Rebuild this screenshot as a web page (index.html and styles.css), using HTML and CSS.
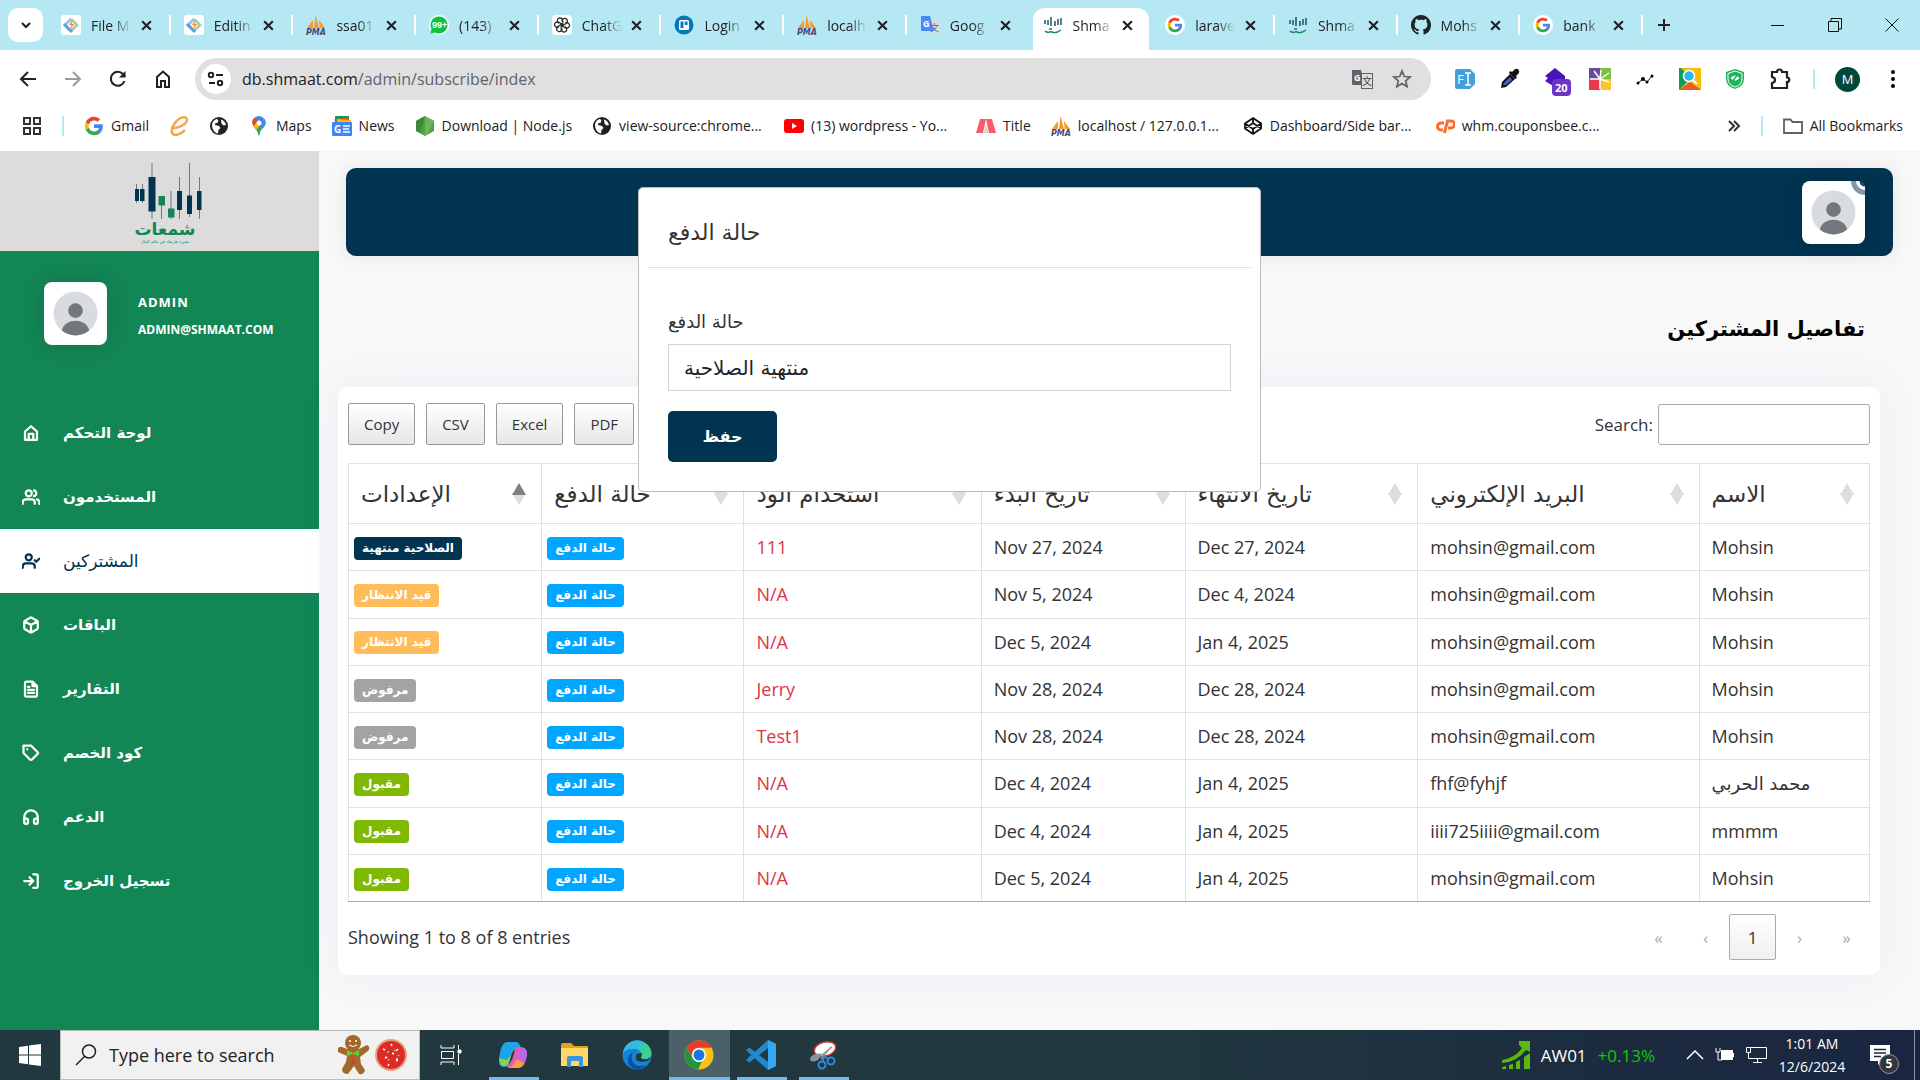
FILE: index.html
```html
<!DOCTYPE html>
<html lang="ar">
<head>
<meta charset="utf-8">
<title>Shmaat</title>
<link rel="stylesheet" href="styles.css">
</head>
<body>
<svg class="sprite" aria-hidden="true">
  <symbol id="g" viewBox="0 0 24 24"><path fill="#4285F4" d="M22.56 12.25c0-.78-.07-1.53-.2-2.25H12v4.26h5.92c-.26 1.37-1.04 2.53-2.21 3.31v2.77h3.57c2.08-1.92 3.28-4.74 3.28-8.09z"/><path fill="#34A853" d="M12 23c2.97 0 5.46-.98 7.28-2.66l-3.57-2.77c-.98.66-2.23 1.06-3.71 1.06-2.86 0-5.29-1.93-6.16-4.53H2.18v2.84C3.99 20.53 7.7 23 12 23z"/><path fill="#FBBC05" d="M5.84 14.09c-.22-.66-.35-1.36-.35-2.09s.13-1.43.35-2.09V7.07H2.18C1.43 8.55 1 10.22 1 12s.43 3.45 1.18 4.93l2.85-2.22.81-.62z"/><path fill="#EA4335" d="M12 5.38c1.62 0 3.06.56 4.21 1.64l3.15-3.15C17.45 2.09 14.97 1 12 1 7.7 1 3.99 3.47 2.18 7.07l3.66 2.84c.87-2.6 3.3-4.53 6.16-4.53z"/></symbol>
  <symbol id="gdisc" viewBox="0 0 20 20"><circle cx="10" cy="10" r="10" fill="#fff"/><use href="#g" x="2" y="2" width="16" height="16"/></symbol>
  <symbol id="hostinger" viewBox="0 0 20 20"><rect width="20" height="20" rx="3" fill="#fff"/><path d="M2 10 9 3l2 2-5 5 5 5-2 2z" fill="#8fc3e8"/><path d="m18 10-7 7-2-2 5-5-5-5 2-2z" fill="#a9cbb0"/><path d="m2 10 8 8 2-2-8-8z" fill="#5f9fe0"/><path d="M11.500 5 8 10h2.500L9 15l4-6h-2.500z" fill="#f5821f"/></symbol>
  <symbol id="pma" viewBox="0 0 20 20"><path d="M1 13 7 5v8zM8 13l1.500-13L13 13zM13.500 13l-.5-8 6 8z" fill="#f79a2c"/><text x="0" y="20" font-family="DejaVu Sans" font-size="8" font-weight="700" font-style="italic" fill="#4a4a78">PMA</text></symbol>
  <symbol id="wa" viewBox="0 0 20 20"><circle cx="10" cy="10" r="10" fill="#fff"/><path d="M10 1.500a8.500 8.500 0 1 1-4 16L1.500 18.500l1-4.500A8.500 8.500 0 0 1 10 1.500z" fill="#0cc143"/><text x="3" y="13" font-family="Liberation Sans" font-size="9" font-weight="700" fill="#fff">99+</text></symbol>
  <symbol id="gpt" viewBox="0 0 20 20"><rect width="20" height="20" rx="4" fill="#fff"/><g fill="none" stroke="#222" stroke-width="1.200"><path id="pl" d="M10 6.500V5.500a2.800 2.800 0 0 1 5-1c.8 1.500.3 3-.8 4L10 11"/><use href="#pl" transform="rotate(60 10 10)"/><use href="#pl" transform="rotate(120 10 10)"/><use href="#pl" transform="rotate(180 10 10)"/><use href="#pl" transform="rotate(240 10 10)"/><use href="#pl" transform="rotate(300 10 10)"/></g></symbol>
  <symbol id="trello" viewBox="0 0 20 20"><circle cx="10" cy="10" r="9.500" fill="#0079bf"/><rect x="5" y="5" width="10" height="10" rx="1.500" fill="#fff"/><path d="M6.500 6.500h3v6.500h-3zM10.800 6.500h2.700V10h-2.700z" fill="#0079bf"/></symbol>
  <symbol id="gtr" viewBox="0 0 20 20"><rect x="9" y="5" width="11" height="14" rx="1" fill="#dcdcdc"/><text x="10" y="16" font-family="Noto Sans CJK SC" font-size="9" fill="#666">文</text><path d="M1 1h9l4 15H2a1 1 0 0 1-1-1z" fill="#4a8af4"/><text x="3" y="12" font-family="Open Sans" font-size="9" font-weight="700" fill="#fff">G</text></symbol>
  <symbol id="shm" viewBox="0 0 20 20"><path d="M2 5v4M5 5v5M8 2v9M12 6v5M15 4v6M18 3v7" stroke="#0a4a5c" stroke-width="1.400"/><path d="M2 16c3 3 5 0 7 1s5 1 9-2M6 14h3" stroke="#138656" stroke-width="1.400" fill="none"/></symbol>
  <symbol id="gh" viewBox="0 0 16 16"><path fill="#1f2328" d="M8 0C3.58 0 0 3.58 0 8c0 3.54 2.290 6.530 5.470 7.590.4.07.55-.17.55-.38 0-.19-.01-.82-.01-1.490-2.010.37-2.530-.49-2.690-.94-.09-.23-.48-.94-.82-1.130-.28-.15-.68-.52-.01-.53.63-.01 1.080.58 1.230.82.72 1.210 1.870.87 2.330.66.07-.52.28-.87.51-1.070-1.780-.2-3.640-.89-3.640-3.950 0-.87.31-1.590.82-2.150-.08-.2-.36-1.020.08-2.120 0 0 .67-.21 2.200.82.64-.18 1.320-.27 2-.27s1.360.09 2 .27c1.530-1.040 2.200-.82 2.200-.82.44 1.100.16 1.920.08 2.120.51.56.82 1.270.82 2.150 0 3.070-1.870 3.750-3.650 3.950.29.25.54.73.54 1.480 0 1.070-.01 1.930-.01 2.200 0 .21.15.46.55.38A8.010 8.010 0 0016 8c0-4.420-3.580-8-8-8z"/></symbol>
  <symbol id="x" viewBox="0 0 12 12"><path d="m2 2 8 8M10 2l-8 8" stroke="#202124" stroke-width="2" fill="none"/></symbol>
  <symbol id="globe" viewBox="0 0 20 20"><circle cx="10" cy="10" r="9" fill="#202124"/><path d="M3 9c0-3 2-5 4.500-6l2 1-1 3H6.500L6 9l4 1 1.500 2-2 2-.5 3.500C5.500 17 3 13 3 9zM12 3.500c2.500.5 4.500 3 5 5.500l-2.500.5-2-2z" fill="#fff"/></symbol>
  <symbol id="avatar" viewBox="0 0 46 46"><circle cx="23" cy="23" r="22.500" fill="#d8dce1"/><circle cx="23" cy="20" r="7.500" fill="#71777d"/><path d="M9 40.500C12 27 34 27 37 40.500a22.500 22.500 0 0 1-28 0z" fill="#71777d"/></symbol>
  <symbol id="sort" viewBox="0 0 14 22"><path d="M7 0l7 12H0z"/><path d="M7 22l7-12H0z"/></symbol>
</svg>

<header class="browser">
  <div class="tabstrip">
    <button class="tablist" aria-label="Search tabs"><svg width="14" height="14" viewBox="0 0 14 14"><path d="m3 5 4 4 4-4" fill="none" stroke="#202124" stroke-width="2"/></svg></button>
    <div class="tabs">
      <div class="tab"><svg class="fav"><use href="#hostinger"/></svg><span class="tabname">File M</span><svg class="close"><use href="#x"/></svg></div>
      <div class="tab"><svg class="fav"><use href="#hostinger"/></svg><span class="tabname">Editin</span><svg class="close"><use href="#x"/></svg></div>
      <div class="tab"><svg class="fav"><use href="#pma"/></svg><span class="tabname">ssa01</span><svg class="close"><use href="#x"/></svg></div>
      <div class="tab"><svg class="fav"><use href="#wa"/></svg><span class="tabname">(143)</span><svg class="close"><use href="#x"/></svg></div>
      <div class="tab"><svg class="fav"><use href="#gpt"/></svg><span class="tabname">ChatG</span><svg class="close"><use href="#x"/></svg></div>
      <div class="tab"><svg class="fav"><use href="#trello"/></svg><span class="tabname">Login</span><svg class="close"><use href="#x"/></svg></div>
      <div class="tab"><svg class="fav"><use href="#pma"/></svg><span class="tabname">localh</span><svg class="close"><use href="#x"/></svg></div>
      <div class="tab nosep"><svg class="fav"><use href="#gtr"/></svg><span class="tabname">Goog</span><svg class="close"><use href="#x"/></svg></div>
      <div class="tab active nosep"><svg class="fav"><use href="#shm"/></svg><span class="tabname">Shma</span><svg class="close"><use href="#x"/></svg></div>
      <div class="tab"><svg class="fav"><use href="#gdisc"/></svg><span class="tabname">larave</span><svg class="close"><use href="#x"/></svg></div>
      <div class="tab"><svg class="fav"><use href="#shm"/></svg><span class="tabname">Shma</span><svg class="close"><use href="#x"/></svg></div>
      <div class="tab"><svg class="fav"><use href="#gh"/></svg><span class="tabname">Mohs</span><svg class="close"><use href="#x"/></svg></div>
      <div class="tab"><svg class="fav"><use href="#gdisc"/></svg><span class="tabname">bank</span><svg class="close"><use href="#x"/></svg></div>
    </div>
    <button class="plain newtab" aria-label="New tab"><svg width="14" height="14" viewBox="0 0 14 14"><path d="M7 1v12M1 7h12" stroke="#202124" stroke-width="2"/></svg></button>
    <div class="winctl">
      <button class="plain" aria-label="Minimize"><svg width="14" height="14" viewBox="0 0 14 14"><path d="M0 7.500h13" stroke="#111"/></svg></button>
      <button class="plain" aria-label="Restore"><svg width="14" height="14" viewBox="0 0 14 14"><path d="M.5 3.500h10v10H.5zM3 3.500v-3h10.500V11h-3" fill="none" stroke="#111"/></svg></button>
      <button class="plain" aria-label="Close"><svg width="14" height="14" viewBox="0 0 14 14"><path d="m.5.5 13 13m0-13-13 13" stroke="#111"/></svg></button>
    </div>
  </div>
  <div class="toolbar">
    <button class="plain tool" aria-label="Back"><svg width="20" height="20" viewBox="0 0 20 20"><path d="M18 10H3m7-7-7 7 7 7" fill="none" stroke="#202124" stroke-width="2"/></svg></button>
    <button class="plain tool" aria-label="Forward"><svg width="20" height="20" viewBox="0 0 20 20"><path d="M2 10h15m-7-7 7 7-7 7" fill="none" stroke="#9c9c9c" stroke-width="2"/></svg></button>
    <button class="plain tool" aria-label="Reload"><svg width="20" height="20" viewBox="0 0 20 20"><path d="M16.500 12A7 7 0 1 1 15 5l2 2.500" fill="none" stroke="#202124" stroke-width="2"/><path d="M17.500 2v6.500H11z" fill="#202124"/></svg></button>
    <button class="plain tool" aria-label="Home"><svg width="20" height="20" viewBox="0 0 20 20"><path d="M4 18V8l6-5.500L16 8v10h-4v-6H8v6z" fill="none" stroke="#202124" stroke-width="2"/></svg></button>
    <div class="omnibox">
      <span class="siteinfo"><svg width="18" height="18" viewBox="0 0 18 18" fill="none" stroke="#202124" stroke-width="2"><circle cx="4" cy="5" r="2.200"/><path d="M9 5h7M2 13h6"/><circle cx="13" cy="13" r="2.200"/></svg></span>
      <span class="url">db.shmaat.com<i>/admin/subscribe/index</i></span>
      <svg width="22" height="22" viewBox="0 0 22 22"><path d="M1 2h9l4 15H2a1 1 0 0 1-1-1z" fill="#5f6368"/><text x="3" y="13" font-family="Open Sans" font-size="9" font-weight="700" fill="#fff">G</text><rect x="10.500" y="5.500" width="11" height="15" fill="#e0e0e0" stroke="#5f6368"/><text x="11" y="17" font-family="Noto Sans CJK SC" font-size="10" fill="#444">文</text></svg>
      <svg width="20" height="20" viewBox="0 0 20 20"><path d="m10 2 2.300 5.500 5.900.5-4.500 3.900 1.400 5.800L10 14.600l-5.100 3.100 1.400-5.800L1.800 8l5.900-.5z" fill="none" stroke="#5f6368" stroke-width="1.700"/></svg>
    </div>
    <div class="exts">
      <span class="tool"><svg width="22" height="22" viewBox="0 0 22 22"><path d="M1 3a2 2 0 0 1 2-2h13l5 5v10l-5 5H3a2 2 0 0 1-2-2z" fill="#42a0dc"/><text x="3" y="16" font-family="Open Sans" font-size="13" fill="#fff">F</text><path d="M11 5h6M11 17h6M14 5v12" stroke="#fff" stroke-width="1.500"/></svg></span>
      <span class="tool"><svg width="22" height="22" viewBox="0 0 22 22"><path d="M15 2q4-3 5 1 1 2-3 5l1 2-2 1-6-6 1-2 2 1z" fill="#111"/><path d="M11 6 3 14l-1 6 5-1 9-8z" fill="#111"/><path d="m5 15 6-6 2 3-6 5H4z" fill="#4a5fd0"/></svg></span>
      <span class="tool badge-host"><svg width="22" height="22" viewBox="0 0 22 22"><path d="M11 0 21 8v3l-10 8L1 13l3-3-3-2z" fill="#4b14b8"/></svg><b class="count">20</b></span>
      <span class="tool"><svg width="22" height="22" viewBox="0 0 22 22"><path d="M0 0h11v11H0z" fill="#6b4a9c"/><path d="M11 0h11v11H11z" fill="#7cc142"/><path d="M0 11h11v11H0z" fill="#e8394a"/><path d="M11 11h11v11H11z" fill="#fbc52f"/><path d="M11 11 5 3M11 11l1-9M11 11l9-6M11 11l9 3M11 11v10M11 11H1" stroke="#fff" stroke-width="1.500"/></svg></span>
      <span class="tool"><svg width="20" height="20" viewBox="0 0 20 20"><path d="m3 14 5-4 4 3 5-6" fill="none" stroke="#111"/><circle cx="3" cy="14" r="1.500"/><circle cx="8" cy="10" r="2"/><circle cx="12" cy="13" r="1.500"/><circle cx="17" cy="7" r="1.500"/></svg></span>
      <span class="tool"><svg width="22" height="22" viewBox="0 0 22 22"><rect width="22" height="22" fill="#fbbc05"/><path d="M0 0h22L0 22z" fill="#0f9d58"/><path d="m0 22 11-8 11 8z" fill="#ea5a2a"/><path d="m2 0 20 20V0z" fill="#fbbc05"/><circle cx="10" cy="8" r="5.500" fill="#29b6f6" stroke="#fff" stroke-width="1.500"/><path d="m14 12 4 4" stroke="#fff" stroke-width="2"/></svg></span>
      <span class="tool"><svg width="22" height="22" viewBox="0 0 22 22"><path d="m11 1 9 3v7q0 7-9 10Q2 18 2 11V4z" fill="#21b35c"/><path d="m11 3 7 2.500V11q0 5.500-7 8Q4 16.500 4 11V5.500z" fill="none" stroke="#fff"/><path d="M6.500 10q4.500-5 9 0-4.500 5-9 0z" fill="#fff"/><path d="M8 14l6-8" stroke="#21b35c" stroke-width="1.500" fill="none"/></svg></span>
      <span class="tool"><svg width="24" height="24" viewBox="0 0 24 24"><path d="M4 5h5a2.500 2.500 0 0 1 5 0h5v5.500a2 2 0 0 1 0 4.500v6H4v-5q3-.5 3-3t-3-3z" fill="none" stroke="#202124" stroke-width="2.200"/></svg></span>
    </div>
    <span class="tsep"></span>
    <span class="profile">M</span>
    <button class="plain" aria-label="Menu"><svg width="6" height="20" viewBox="0 0 6 20"><circle cx="3" cy="3" r="2"/><circle cx="3" cy="10" r="2"/><circle cx="3" cy="17" r="2"/></svg></button>
  </div>
  <nav class="bookmarks">
    <svg width="20" height="20" viewBox="0 0 20 20"><path d="M2 2h6v6H2zM12 2h6v6h-6zM2 12h6v6H2zM12 12h6v6h-6z" fill="none" stroke="#333" stroke-width="2"/></svg>
    <span class="tsep"></span>
    <a href="#"><svg class="fav"><use href="#g"/></svg>Gmail</a>
    <a href="#" aria-label="e"><svg class="fav" viewBox="0 0 20 20"><path d="M2 12C9 13 18 8 18 4c0-5-8-3-12 3-4 5-5 11 0 12 4 0 7-2 10-5" fill="none" stroke="#f9a34e" stroke-width="2.500"/></svg></a>
    <a href="#" aria-label="site"><svg class="fav"><use href="#globe"/></svg></a>
    <a href="#"><svg class="fav" viewBox="0 0 20 20"><path d="M10 20Q9 14 5 11 1 4 6 1.500L14 5z" fill="#34a853"/><path d="M10 20Q11 14 15 11 18 7 15.500 3L5 11q4 4 5 9z" fill="#34a853"/><path d="M4 9Q2 4 6 1.500L10 6 5 11z" fill="#ea4335"/><path d="M6 1.500Q11-2 15.500 3L10 7z" fill="#4285f4"/><path d="m4.500 10 4-4 3 3L7 14z" fill="#fbbc04"/><path d="m15.500 3-5 6 1 5 4-4q2-4 0-7z" fill="#4285f4"/><circle cx="10" cy="7" r="2.500" fill="#fff"/></svg>Maps</a>
    <a href="#"><svg class="fav" viewBox="0 0 20 20"><path d="M3 0h14v8H3z" fill="#0f9d58"/><path d="M1 4 16 1l2 6z" fill="#ea4335"/><path d="m5 3 14 1v5H5z" fill="#fbbc04"/><rect y="6" width="20" height="14" rx="1" fill="#4285f4"/><text x="2" y="17" font-family="Open Sans" font-size="10" font-weight="700" fill="#fff">G</text><path d="M11 10h7M11 13h6M11 16h7" stroke="#fff" stroke-width="1.500"/></svg>News</a>
    <a href="#"><svg class="fav" viewBox="0 0 20 20"><path d="m10 0 9 5v10l-9 5-9-5V5z" fill="#539e43"/><path d="m10 0 9 5-6 13-3 2z" fill="#6cb35a"/><path d="m1 5 9-5-5 17-4-2z" fill="#3f873f"/></svg>Download | Node.js</a>
    <a href="#" class="wide"><svg class="fav"><use href="#globe"/></svg>view-source:chrome...</a>
    <a href="#" class="wide"><svg class="fav" viewBox="0 0 20 20"><rect y="3" width="20" height="14" rx="3" fill="#f00"/><path d="m8 7 5 3-5 3z" fill="#fff"/></svg>(13) wordpress - Yo...</a>
    <a href="#"><svg class="fav" viewBox="0 0 20 20"><path d="M4 3h6L7 17H0z" fill="#fb5a6b"/><path d="M10 3h6l4 14h-7z" fill="#fb5a6b"/><path d="m10 8 2.500 9h-5z" fill="#cfd3da"/></svg>Title</a>
    <a href="#" class="wide"><svg class="fav"><use href="#pma"/></svg>localhost / 127.0.0.1...</a>
    <a href="#" class="wide"><svg class="fav" viewBox="0 0 20 20"><path d="m10 2 8 5.500v5L10 18l-8-5.500v-5zM10 2v5m0 6v5M2 7.500l8 5.500 8-5.500M2 12.500 10 7l8 5.500" fill="none" stroke="#111" stroke-width="1.800"/></svg>Dashboard/Side bar...</a>
    <a href="#" class="wide"><svg class="fav" viewBox="0 0 20 20"><path d="M9 7H6a3.500 3.500 0 1 0 0 7h2M9.500 17l3-12H16a3.500 3.500 0 1 1 0 7h-3" fill="none" stroke="#ff6c2c" stroke-width="3"/></svg>whm.couponsbee.c...</a>
    <svg class="more" width="14" height="12" viewBox="0 0 14 12"><path d="m2 1 5 5-5 5M7 1l5 5-5 5" fill="none" stroke="#333" stroke-width="2"/></svg>
    <span class="tsep"></span>
    <a href="#" class="all"><svg class="fav" viewBox="0 0 20 20"><path d="M1 16V3.500h6.500L9.500 6H19v11H1z" fill="none" stroke="#5f6368" stroke-width="1.800"/></svg>All Bookmarks</a>
  </nav>
</header>

<div class="app">
  <aside class="sidebar">
    <div class="brand">
      <svg width="72" height="84" viewBox="132 161 72 84">
        <path d="M136.500 184v19M142.500 184v19M152 163v56M161.500 196v23M171 191v28M179.500 177v42M189.500 163v54M199.500 177v42" stroke="#777" stroke-width="1"/>
        <path fill="#003451" d="M135 189h4v12h-4zM140 189h4.500v12H140zM148.500 177h7v34.500h-7zM177 191h5v19h-5zM187 195.500h5V214h-5zM197 191h4.500v19H197z"/>
        <path fill="#138656" d="M158.500 196h6.500v9.500h-6.500zM168 208.500h6.500v9H168z"/>
        <text x="165" y="235" text-anchor="middle" font-family="DejaVu Sans" font-size="17" font-weight="700" fill="#138656">شمعات</text>
        <text x="165" y="243" text-anchor="middle" font-family="DejaVu Sans" font-size="4" fill="#138656">تضيء طريقك في عالم المال</text>
      </svg>
    </div>
    <div class="user">
      <span class="avatar"><svg><use href="#avatar"/></svg></span>
      <div><p class="uname">ADMIN</p><p class="umail">ADMIN@SHMAAT.COM</p></div>
    </div>
    <nav class="menu">
      <a href="#"><svg viewBox="0 0 24 24"><path d="M4 10l8-7 8 7v11H4zM9 21v-8h6v8"/></svg>لوحة التحكم</a>
      <a href="#"><svg viewBox="0 0 24 24"><path d="M17 21v-2a4 4 0 0 0-4-4H5a4 4 0 0 0-4 4v2"/><circle cx="9" cy="7" r="4"/><path d="M23 21v-2a4 4 0 0 0-3-3.870M16 3.130a4 4 0 0 1 0 7.750"/></svg>المستخدمون</a>
      <a href="#" class="current"><svg viewBox="0 0 24 24"><path d="M17 21v-2a4 4 0 0 0-4-4H5a4 4 0 0 0-4 4v2"/><circle cx="9" cy="7" r="4"/><path d="m17 11 2 2 4-4"/></svg>المشتركين</a>
      <a href="#"><svg viewBox="0 0 24 24"><path d="M21 16V8a2 2 0 0 0-1-1.730l-7-4a2 2 0 0 0-2 0l-7 4A2 2 0 0 0 3 8v8a2 2 0 0 0 1 1.730l7 4a2 2 0 0 0 2 0l7-4A2 2 0 0 0 21 16zM3.270 6.960 12 12.010l8.730-5.050M12 22.080V12"/></svg>الباقات</a>
      <a href="#"><svg viewBox="0 0 24 24"><path d="M14 2H6a2 2 0 0 0-2 2v16a2 2 0 0 0 2 2h12a2 2 0 0 0 2-2V8zM14 2v6h6M16 13H8M16 17H8M10 9H8"/></svg>التقارير</a>
      <a href="#"><svg viewBox="0 0 24 24"><path d="m20.590 13.410-7.170 7.170a2 2 0 0 1-2.830 0L2 12V2h10l8.590 8.590a2 2 0 0 1 0 2.820zM7 7h.01"/></svg>كود الخصم</a>
      <a href="#"><svg viewBox="0 0 24 24"><path d="M3 18v-6a9 9 0 0 1 18 0v6M21 19a2 2 0 0 1-2 2h-1a2 2 0 0 1-2-2v-3a2 2 0 0 1 2-2h3zM3 19a2 2 0 0 0 2 2h1a2 2 0 0 0 2-2v-3a2 2 0 0 0-2-2H3z"/></svg>الدعم</a>
      <a href="#"><svg viewBox="0 0 24 24"><path d="M15 3h4a2 2 0 0 1 2 2v14a2 2 0 0 1-2 2h-4M10 17l5-5-5-5M15 12H3"/></svg>تسجيل الخروج</a>
    </nav>
  </aside>

  <main class="main">
    <div class="topbar"><span class="avatar status"><svg><use href="#avatar"/></svg></span></div>
    <h1>تفاصيل المشتركين</h1>
    <section class="card">
      <div class="controls">
        <div class="exports"><button>Copy</button><button>CSV</button><button>Excel</button><button>PDF</button></div>
        <div class="search"><label for="q">Search:</label><input id="q" type="search"></div>
      </div>
      <table>
        <colgroup><col class="c1"><col class="c2"><col class="c3"><col class="c4"><col class="c5"><col class="c6"><col class="c7"></colgroup>
        <thead><tr>
          <th><div class="hd">الإعدادات<svg class="sort asc"><use href="#sort"/><path d="M7 0l7 12H0z" fill="#808080"/></svg></div></th>
          <th><div class="hd">حالة الدفع<svg class="sort"><use href="#sort"/></svg></div></th>
          <th><div class="hd">استخدام الود<svg class="sort"><use href="#sort"/></svg></div></th>
          <th><div class="hd">تاريخ البدء<svg class="sort"><use href="#sort"/></svg></div></th>
          <th><div class="hd">تاريخ الانتهاء<svg class="sort"><use href="#sort"/></svg></div></th>
          <th><div class="hd">البريد الإلكتروني<svg class="sort"><use href="#sort"/></svg></div></th>
          <th><div class="hd">الاسم<svg class="sort"><use href="#sort"/></svg></div></th>
        </tr></thead>
        <tbody>
          <tr><td><span class="tag navy">الصلاحية منتهية</span></td><td><span class="tag blue">حالة الدفع</span></td><td class="red">111</td><td>Nov 27, 2024</td><td>Dec 27, 2024</td><td>mohsin@gmail.com</td><td>Mohsin</td></tr>
          <tr><td><span class="tag amber">قيد الانتظار</span></td><td><span class="tag blue">حالة الدفع</span></td><td class="red">N/A</td><td>Nov 5, 2024</td><td>Dec 4, 2024</td><td>mohsin@gmail.com</td><td>Mohsin</td></tr>
          <tr><td><span class="tag amber">قيد الانتظار</span></td><td><span class="tag blue">حالة الدفع</span></td><td class="red">N/A</td><td>Dec 5, 2024</td><td>Jan 4, 2025</td><td>mohsin@gmail.com</td><td>Mohsin</td></tr>
          <tr><td><span class="tag grey">مرفوض</span></td><td><span class="tag blue">حالة الدفع</span></td><td class="red">Jerry</td><td>Nov 28, 2024</td><td>Dec 28, 2024</td><td>mohsin@gmail.com</td><td>Mohsin</td></tr>
          <tr><td><span class="tag grey">مرفوض</span></td><td><span class="tag blue">حالة الدفع</span></td><td class="red">Test1</td><td>Nov 28, 2024</td><td>Dec 28, 2024</td><td>mohsin@gmail.com</td><td>Mohsin</td></tr>
          <tr><td><span class="tag green">مقبول</span></td><td><span class="tag blue">حالة الدفع</span></td><td class="red">N/A</td><td>Dec 4, 2024</td><td>Jan 4, 2025</td><td>fhf@fyhjf</td><td class="ar">محمد الحربي</td></tr>
          <tr><td><span class="tag green">مقبول</span></td><td><span class="tag blue">حالة الدفع</span></td><td class="red">N/A</td><td>Dec 4, 2024</td><td>Jan 4, 2025</td><td>iiii725iiii@gmail.com</td><td>mmmm</td></tr>
          <tr><td><span class="tag green">مقبول</span></td><td><span class="tag blue">حالة الدفع</span></td><td class="red">N/A</td><td>Dec 5, 2024</td><td>Jan 4, 2025</td><td>mohsin@gmail.com</td><td>Mohsin</td></tr>
        </tbody>
      </table>
      <div class="foot">
        <span>Showing 1 to 8 of 8 entries</span>
        <div class="pager"><button disabled>«</button><button disabled>‹</button><button class="on">1</button><button disabled>›</button><button disabled>»</button></div>
      </div>
    </section>
  </main>
</div>

<form class="modal" role="dialog" aria-label="حالة الدفع">
  <h2>حالة الدفع</h2>
  <div class="mbody">
    <label for="st">حالة الدفع</label>
    <select id="st"><option>منتهية الصلاحية</option></select>
    <button type="button" class="save">حفظ</button>
  </div>
</form>

<footer class="taskbar">
  <button class="plain start" aria-label="Start"><svg width="22" height="22" viewBox="0 0 22 22"><path d="m0 3 9-1.300V10.500H0zM10 1.500 22 0v10.500H10zM0 11.500h9v8.800L0 19zM10 11.500h12V22l-12-1.500z" fill="#fff"/></svg></button>
  <label class="tsearch"><svg width="22" height="24" viewBox="0 0 22 24"><circle cx="14" cy="8.500" r="6.500" fill="none" stroke="#222" stroke-width="1.500"/><path d="M9.500 13.500 1 22" stroke="#222" stroke-width="1.500"/></svg><input type="text" placeholder="Type here to search">
    <svg width="70" height="42" viewBox="0 0 70 42"><g fill="#a5682a"><circle cx="15" cy="9" r="8"/><path d="M9 15h12l8-4q4 2 1 6l-8 6 1 7 4 6q-1 5-6 4l-5-8-6 8q-6 0-6-5l4-7 1-6-9-4q-1-6 4-5z"/></g><path d="m9 16 6 3 6-3v6l-6-2-6 2z" fill="#5ed03c"/><path d="M11 11q4 3 8 0" fill="none" stroke="#fff"/><circle cx="12" cy="7" r="1" fill="#fff"/><circle cx="18" cy="7" r="1" fill="#fff"/><path d="M15 24v6" stroke="#d83a2a" stroke-width="2"/><circle cx="53" cy="21" r="16" fill="#e8a07a"/><circle cx="53" cy="21" r="14" fill="#e02a2a"/><path d="m45 15 2 1m6-6 1 2m6 3-2 2m-11 7 2-1m5-4 2 1m4 6-2 1m-8 5 1-2m7-5 2 0" stroke="#fff" stroke-width="1.500"/><path d="m49 18 2 0m5-2 1 1m-7 9 1-1m9-3 1-1" stroke="#6f6" stroke-width="1.500"/></svg></label>
  <div class="pins">
    <span><svg width="22" height="20" viewBox="0 0 22 20" fill="none" stroke="#fff"><path d="M1 0v3h13V0M1.500 6.500h12v7h-12zM1 20v-3h13v3M18.500 0v4M18.500 9v11"/><path d="M18 5h3v3h-3z" fill="#fff"/></svg></span>
    <span class="run"><svg width="30" height="30" viewBox="0 0 30 30"><path d="M9 2h9q3 0 4 4l1 3h-5q-3 0-4 4l-3 10q-1 4-5 4-5 0-5-6Q2 3 9 2z" fill="#1fa3e8"/><path d="M1 18q1 8 5 8t5-4l3-9q1-4 4-4L9 20z" fill="#8bd34a"/><path d="M21 28h-9q-3 0-4-3 4 0 5-4l3-10q1-4 5-4 9 0 8 8-2 13-8 13z" fill="#e35bb0"/><path d="M23 7q7 1 6 9-2 5-4 7l-5-6z" fill="#b36be8"/><path d="M12 28h9q3-1 5-5l-7-4-4 6q-2 3-5 2z" fill="#ff9a4a"/><path d="m15 11 2-1-3 10-2 1z" fill="#213840"/></svg></span>
    <span><svg width="28" height="26" viewBox="0 0 28 26"><path d="M0 3a2 2 0 0 1 2-2h8l3 3h13a1 1 0 0 1 1 1v18H0z" fill="#e2a21c"/><path d="M0 6h27v18H0z" fill="#ffd765"/><path d="M6 25v-9a2 2 0 0 1 2-2h12a2 2 0 0 1 2 2v9h-4v-6h-8v6z" fill="#3b94dc"/></svg></span>
    <span><svg width="30" height="30" viewBox="0 0 30 30"><circle cx="15" cy="15" r="14.500" fill="#1683d8"/><path d="M1 13C3 4 10 .5 15 .5 24 .5 30 8 29.500 14c-.5 6-9 7-11 4 2-3 1-8-4-9-6-1-11 0-13.500 4z" fill="#3fd08f"/><path d="M1 13C3 4 10 .5 15 .5q5 0 8 3L15 9q-9-2-14 4z" fill="#35b8e8"/><path d="M10 15c-2 8 5 13 14 10-6 7-18 5-18-5 0-5 4-8 8-9q-4 1-4 4z" fill="#0c4f9e"/><path d="M18.500 18q2-2 1-5l-5 1q-4 10 11 7 3-2 3-4-4 4-10 1z" fill="#213840"/></svg></span>
    <span class="run chromeon"><svg width="30" height="30" viewBox="0 0 30 30"><circle cx="15" cy="15" r="14.500" fill="#fbc116"/><path d="M2.400 7.800A14.500 14.500 0 0 1 27.600 7.800H15a7 7 0 0 0-6.200 10.500z" fill="#e33b2e"/><path d="M2.400 7.800 9 18.500A7 7 0 0 0 18 21.300L14 29.500A14.500 14.500 0 0 1 2.400 7.800z" fill="#229342"/><circle cx="15" cy="15" r="7" fill="#fff"/><circle cx="15" cy="15" r="5.500" fill="#1a73e8"/></svg></span>
    <span class="run"><svg width="30" height="30" viewBox="0 0 30 30"><path d="m22 0 8 4v22l-8 4L2 12 0 10l3-2.500 3 2L22 22V8L6 20.500l-3 2L0 20l2-2z" fill="#1f8ad2"/><path d="m22 0 8 4v22l-8 4z" fill="#35a8f0"/></svg></span>
    <span class="run"><svg width="30" height="30" viewBox="0 0 30 30"><ellipse cx="17" cy="9" rx="11" ry="7" fill="#fff" stroke="#d03030" stroke-width="1.500" transform="rotate(-15 17 9)"/><path d="M2 18q4-6 12-4l-4 6q-8 4-8-2z" fill="#8a9298"/><path d="m11 17 13-10M13 19l10-12" stroke="#999" stroke-width="1.500"/><g fill="none" stroke="#2f8ad8" stroke-width="2"><circle cx="14" cy="25" r="3.500"/><circle cx="23" cy="21" r="3.500"/><path d="m15 21 1-5 4 3"/></g></svg></span>
  </div>
  <div class="tray">
    <svg width="28" height="28" viewBox="0 0 28 28" fill="#5cb811"><path d="M0 19Q13 17 20 7l-3-3V0h11v11l-4-2Q15 21 0 22zM0 28q0-3 4-3v3zM7 28v-4l4-1v5zM14 28v-7l4-2v9zM22 28V16l6-4v16z"/></svg>
    <span class="tick">AW01</span><span class="up">+0.13%</span>
    <svg class="chev" width="18" height="10" viewBox="0 0 18 10"><path d="m1 9 8-8 8 8" fill="none" stroke="#fff" stroke-width="1.500"/></svg>
    <svg width="20" height="16" viewBox="0 0 20 16"><path d="M1 1v4h4V1M3 5v8h4" fill="none" stroke="#fff"/><path d="M6.500 3.500h11v9h-11z" fill="#fff" stroke="#fff"/><path d="M18.500 6v4" stroke="#fff"/></svg>
    <svg width="21" height="18" viewBox="0 0 21 18"><path d="M5 1.500h15.500v11H2.500V7M7 16.500h9M11.500 13v3M.5 1.500h4v5h-4z" fill="none" stroke="#fff"/></svg>
    <span class="clock">1:01 AM<br>12/6/2024</span>
    <span class="note"><svg width="20" height="20" viewBox="0 0 20 20"><path d="M0 0h20v16h-8l-4 4v-4H0z" fill="#fff"/><path d="M4 4.500h12M4 8h12M4 11.500h7" stroke="#1b2840" stroke-width="1.300"/></svg><b>5</b></span>
    <span class="peek"></span>
  </div>
</footer>
</body>
</html>
```
FILE: styles.css
```css
*, *::before, *::after { box-sizing: border-box; }
body {
  margin: 0;
  min-height: 100vh;
  display: flex;
  flex-direction: column;
  position: relative;
  font-family: "Open Sans", "DejaVu Sans", sans-serif;
  color: #333;
}
button, input, select { font-family: inherit; }
a { color: inherit; text-decoration: none; }
p, h1, h2 { margin: 0; }
.sprite { display: none; }
.plain { border: 0; background: none; padding: 0; display: grid; place-items: center; }

/* browser chrome */
.browser { background: #fff; font-size: 14px; color: #202124; }
.tabstrip { display: flex; height: 50px; background: #b5e8f3; padding-left: 8px; align-items: stretch; }
.tablist { width: 35px; height: 34px; margin: 8px 5px 0 0; border: 0; border-radius: 10px; background: #fff; padding: 0; display: grid; place-items: center; }
.tabs { display: flex; flex: 0 1 1595px; min-width: 0; }
.tab { flex: 1 1 0; min-width: 0; display: flex; align-items: center; padding: 0 18px 0 13px; position: relative; }
.tab::after { content: ""; position: absolute; right: 0; top: 15px; width: 2px; height: 20px; background: #fff; }
.tab.nosep::after { display: none; }
.tab.active { z-index: 0; }
.tab.active::before { content: ""; position: absolute; z-index: -1; inset: 8px 3px 0 3px; background: #fff; border-radius: 12px 12px 0 0; }
.fav { width: 20px; height: 20px; flex: none; }
.tabname { flex: 1; min-width: 0; margin: 0 8px 0 10px; font-size: 14px; overflow: hidden; white-space: nowrap; -webkit-mask-image: linear-gradient(90deg, #000 22px, transparent 40px); mask-image: linear-gradient(90deg, #000 22px, transparent 40px); }
.close { width: 13px; height: 13px; flex: none; }
.newtab { width: 42px; }
.winctl { display: flex; margin-left: auto; }
.winctl button { width: 57px; }
.toolbar { display: flex; align-items: center; height: 58px; padding: 0 24px 0 5px; }
.tool { width: 45px; height: 34px; display: grid; place-items: center; flex: none; }
.omnibox { flex: 1; display: flex; align-items: center; gap: 19px; height: 42px; margin: 0 11px 0 10px; padding: 0 19px 0 6px; border-radius: 21px; background: #e0e0e0; }
.siteinfo { width: 30px; height: 30px; border-radius: 50%; background: #fff; display: grid; place-items: center; }
.url { flex: 1; font-size: 16px; margin-left: -8px; }
.url i { font-style: normal; color: #5f6368; }
.exts { display: flex; }
.badge-host { position: relative; }
.count { position: absolute; left: 20px; top: 17px; font-size: 11px; line-height: 17px; padding: 0 3px; color: #fff; background: #6b35c9; border-radius: 4px; }
.tsep { width: 2px; height: 20px; background: #b5e8f3; flex: none; }
.toolbar .tsep { margin: 0 20px 0 11px; }
.profile { width: 25px; height: 25px; border-radius: 50%; background: #00483c; color: #fff; font-size: 13px; display: grid; place-items: center; margin-right: 30px; }
.bookmarks { display: flex; align-items: center; height: 43px; padding: 0 17px 8px 22px; gap: 20px; font-size: 14px; white-space: nowrap; }
.bookmarks a { display: flex; align-items: center; gap: 7px; }
.bookmarks .wide { min-width: 172px; }
.bookmarks .more { margin-left: auto; }

/* application */
.app { flex: 1; display: flex; background: #f8f8f8; }
.sidebar { width: 319px; flex: none; background: #138656; color: #fff; }
.brand { height: 100px; background: #dcdcdc; display: grid; place-items: center; padding: 4px 0 0 17px; }
.user { display: flex; align-items: center; gap: 31px; padding: 31px 40px 32px 44px; border-bottom: 1px solid #188a5b; }
.avatar { width: 63px; height: 63px; flex: none; border-radius: 8px; background: #fff; display: grid; place-items: center; box-shadow: 0 0 20px rgba(0, 0, 0, .15); }
.avatar svg { width: 45px; height: 45px; }
.uname, .umail { font-weight: 700; line-height: 28px; }
.user div { padding-top: 4px; }
.uname { font-size: 13px; letter-spacing: 1px; }
.umail { font-size: 12px; }
.menu { padding-top: 23px; }
.menu a { display: flex; align-items: center; gap: 23px; height: 64px; padding: 0 22px; font: 700 15px "DejaVu Sans", sans-serif; }
.menu svg { width: 18px; height: 18px; fill: none; stroke: currentColor; stroke-width: 3; stroke-linejoin: round; stroke-linecap: round; }
.menu .current { background: #fff; color: #003451; font-weight: 400; font-size: 17px; }
.main { flex: 1; min-width: 0; padding: 17px 40px 50px 19px; }
.topbar { display: flex; justify-content: flex-end; align-items: center; height: 88px; margin: 0 -13px 0 8px; padding-right: 28px; border-radius: 10px; background: #003451; box-shadow: 0 0 20px rgba(0, 0, 0, .08); }
.status { position: relative; overflow: hidden; }
.status::after { content: ""; position: absolute; right: -14px; top: -14px; width: 28px; height: 28px; border-radius: 50%; background: radial-gradient(circle, #003451 5px, #fff 6px) padding-box; border: 5px solid #7f99a8; }
h1 { text-align: right; font: 700 21px/40px "DejaVu Sans", sans-serif; color: #000; margin: 53px 15px 38px 0; }
.card { background: #fff; border-radius: 10px; padding: 16px 10px 15px; box-shadow: 0 0 40px rgba(90, 110, 220, .08); }
.controls { display: flex; justify-content: space-between; align-items: center; margin-bottom: 18px; }
.exports { display: flex; gap: 11px; }
.exports button { height: 42px; padding: 0 15px; font-size: 15px; color: #333; border: 1px solid #999; border-radius: 2px; background: linear-gradient(#fff, #e6e6e6); }
.search { display: flex; align-items: center; gap: 5px; padding-top: 1px; font-size: 17px; }
.search input { width: 212px; height: 41px; border: 1px solid #aaa; border-radius: 3px; background: #fff; }
table { width: 100%; height: 439px; table-layout: fixed; border-collapse: collapse; border-bottom: 1px solid #aaa; }
.c1 { width: 12.7%; } .c2 { width: 13.3%; } .c3 { width: 15.6%; } .c4 { width: 13.4%; } .c5 { width: 15.3%; } .c6 { width: 18.500%; } .c7 { width: 11.2%; }
th, td { border: 1px solid #dee2e6; text-align: left; }
th { height: 60px; padding: 0 15px 0 12px; font: 400 23px "DejaVu Sans", sans-serif; white-space: nowrap; }
.hd { display: flex; justify-content: space-between; align-items: center; }
.sort { width: 14px; height: 22px; fill: #ddd; flex: none; }
tbody td { height: 47px; padding: 0 12px; font-size: 18px; white-space: nowrap; }
tbody tr:last-child td { border-bottom-color: #aaa; }
tbody td:nth-child(-n+2) { padding: 0 5px; line-height: 24px; }
td.ar { font-family: "DejaVu Sans", sans-serif; }
.red { color: #dc3545; }
.tag { display: inline-block; vertical-align: middle; padding: 0 8px; border-radius: 4px; color: #fff; font: 700 12px/23px "DejaVu Sans", sans-serif; }
.navy { background: #003451; } .blue { background: #00a6ff; } .amber { background: #ffbc58; } .grey { background: #a3a3a3; } .green { background: #80b903; }
.foot { display: flex; justify-content: space-between; align-items: center; padding-top: 12px; font-size: 18px; }
.pager button { width: 47px; height: 46px; border: 1px solid transparent; background: none; border-radius: 2px; font-size: 17px; padding: 0; color: #333; }
.pager button:disabled { color: #aaa; }
.pager .on { border-color: #aaa; background: linear-gradient(#fff, #efefef); }

/* dialog over the page */
.modal { position: absolute; top: 187px; left: 50%; width: 623px; margin-left: -322px; padding: 0 9px 29px; background: #fff; border: 1px solid #bbb; border-radius: 5px; }
.modal h2 { font: 400 22px/69px "DejaVu Sans", sans-serif; padding: 10px 0 0 20px; border-bottom: 1px solid #dee2e6; }
.mbody { display: flex; flex-direction: column; align-items: flex-start; padding: 40px 20px 0; }
.mbody label { font: 400 18px/28px "DejaVu Sans", sans-serif; margin-bottom: 8px; }
.mbody select { appearance: none; width: 100%; height: 47px; padding: 0 15px; border: 1px solid #ced4da; border-radius: 0; background: #fff; font: 400 20px "DejaVu Sans", sans-serif; color: #212529; }
.save { margin-top: 20px; width: 109px; height: 51px; border: 0; border-radius: 5px; background: #003451; color: #fff; font: 700 16px "DejaVu Sans", sans-serif; }

/* taskbar */
.taskbar { display: flex; align-items: stretch; height: 50px; background: linear-gradient(90deg, #213840, #21383f 60%, #1c2b40 85%, #1a2641); color: #fff; }
.start { width: 60px; }
.tsearch { width: 360px; display: flex; align-items: center; gap: 12px; padding: 0 11px 0 14px; background: #f1f1f1; border: 1px solid #b8bcbd; }
.tsearch input { flex: 1; min-width: 0; border: 0; background: none; padding: 0; font-size: 18px; }
.tsearch input::placeholder { color: #222; opacity: 1; }
.tsearch svg { flex: none; }
.pins { display: flex; }
.pins span { width: 62px; display: grid; place-items: center; position: relative; }
.run::after { content: ""; position: absolute; left: 7px; right: 5px; bottom: 0; height: 3px; background: #76b9ed; }
.chromeon { background: linear-gradient(90deg, transparent 1px, #4c6068 1px); }
.chromeon::after { left: 1px; right: 0; }
.tray { margin-left: auto; display: flex; align-items: center; gap: 11px; font-size: 17px; }
.up { color: #16c60c; }
.chev { margin-left: 20px; }
.clock { font-size: 14px; line-height: 23px; text-align: center; width: 70px; margin-left: -1px; }
.note { position: relative; margin-left: 12px; display: grid; }
.note b { position: absolute; left: 9px; top: 9px; width: 20px; height: 20px; border: 1px solid #999; border-radius: 50%; background: #30363c; font-size: 12px; line-height: 18px; text-align: center; }
.peek { align-self: stretch; width: 6px; border-left: 1px solid #8a93a0; margin-left: 13px; }
```
